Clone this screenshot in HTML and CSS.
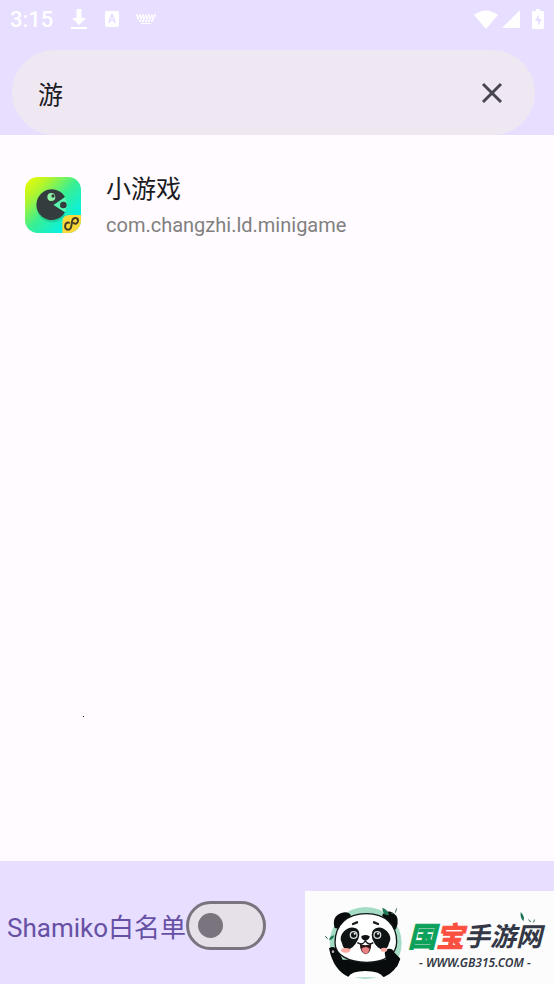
FILE: index.html
```html
<!DOCTYPE html>
<html lang="zh-CN">
<head>
    <meta charset="UTF-8">
    <meta name="viewport" content="width=device-width, initial-scale=1.0">
    <title>Shamiko白名单</title>
    <link rel="stylesheet" href="styles.css">
</head>
<body>
    <header class="top">
        <div class="status-bar">
            <span class="clock">3:15</span>
            <svg class="icon-download" viewBox="0 0 16 22"><path d="M5.500 1h5v9H15l-7 7-7-7h4.500zM0 19h16v2H0z"/></svg>
            <svg class="icon-a" viewBox="0 0 14 16"><path fill-rule="evenodd" d="M1 0h12l1 1v14l-1 1H1l-1-1V1zM6 3 3 12h2l.6-2h2.800L9 12h2L8 3zm1 2.500L8 8.500H6z"/></svg>
            <svg class="icon-keyboard" viewBox="0 0 20 12">
                <path d="M0 2.500h20M1 5.500h18M3 8h14" stroke-width="2" stroke-dasharray="2 1"/>
                <path d="M5 10.500h10M1 4h18"/>
            </svg>
            <span class="spacer"></span>
            <svg class="icon-wifi" viewBox="0 0 24 19"><path d="M0 5Q12-4 24 5L12 19z"/></svg>
            <svg class="icon-signal" viewBox="0 0 18 18"><path d="M18 0v18H0z"/></svg>
            <svg class="icon-battery" viewBox="0 0 12 20"><path fill-rule="evenodd" d="M4 0h4v2h3l1 1v16l-1 1H1l-1-1V3l1-1h3zM7 5l-4 7h3v5l4-7H7z"/></svg>
        </div>
        <form class="search">
            <input class="search-input" type="text" value="游" aria-label="搜索">
            <button class="clear" type="button" aria-label="清除">
                <svg viewBox="0 0 22 22"><path d="M2 2l18 18M20 2 2 20"/></svg>
            </button>
        </form>
    </header>

    <main class="list">
        <div class="app">
            <svg class="app-icon" viewBox="0 0 168 168">
                <defs>
                    <linearGradient id="appBg" x1="0" y1="0" x2="1" y2="1">
                        <stop offset="0" stop-color="#f4fa00"/>
                        <stop offset=".22" stop-color="#b4f62a"/>
                        <stop offset=".5" stop-color="#38ef94"/>
                        <stop offset=".8" stop-color="#08f0e0"/>
                    </linearGradient>
                    <clipPath id="appClip"><rect width="168" height="168" rx="38"/></clipPath>
                </defs>
                <g clip-path="url(#appClip)">
                    <rect width="168" height="168" fill="url(#appBg)"/>
                    <path d="M120 66A46 46 0 1 0 120 114L86 90z" fill="#16a878" opacity=".4"/>
                    <path d="M120 60A46 46 0 1 0 120 106L86 84z" fill="#343c3e"/>
                    <circle cx="79" cy="60" r="12" fill="#8df7a4"/>
                    <circle cx="84" cy="57" r="5" fill="#343c3e"/>
                    <path d="M86 84l34-23 6 22-6 22z" fill="#5cf3b0"/>
                    <circle cx="115" cy="84" r="10" fill="#343c3e"/>
                    <path d="M112 168v-32q0-22 22-22h34v54z" fill="#fbd93a"/>
                    <path d="M132 137c-14-3-16 21-3 21 14 0 9-18 13-28 4-11 18-8 17 2-1 8-8 10-13 6" fill="none" stroke="#443d25" stroke-width="6" stroke-linecap="round"/>
                </g>
            </svg>
            <div class="app-text">
                <h2 class="app-name">小游戏</h2>
                <p class="app-package">com.changzhi.ld.minigame</p>
            </div>
        </div>
        <span class="dot"></span>
    </main>

    <footer class="bottom">
        <label class="switch-label" for="whitelist">Shamiko白名单</label>
        <input class="switch" type="checkbox" role="switch" id="whitelist">
        <div class="brand">
            <svg class="panda" viewBox="72 75 240 222">
                <circle cx="197" cy="189" r="108" fill="#a5dcc5"/>
                <path d="M104 144q-10-34 20-45 20-6 29 7l-34 41zM246 106q14-18 34-7 22 14 8 48l-10 6z" fill="#090c0d"/>
                <path d="M87 205q14-10 27 4l14 30h130l-4-22q9-16 24-5l23 24q-12 38-49 55H146q-46-20-59-86z" fill="#090c0d"/>
                <path d="M144 292q10-19 52-19t55 19z" fill="#fff"/>
                <path d="M105 188c0-53 35-87 94-87s91 35 91 85c0 38-36 61-90 61s-95-22-95-59z" fill="#fff" stroke="#111617" stroke-width="4"/>
                <path d="M254 220q2-14 14-14 12 0 14 12l18 18-10 26-30-12z" fill="#090c0d"/>
                <circle cx="99" cy="215" r="4" fill="#b4aead"/>
                <g fill="#101314">
                    <path d="M126 190q-11-18 6-36 17-17 36-9 16 9 7 32-15 31-35 32-10-1-14-19z"/>
                    <path d="M267 190q11-18-6-36-17-17-34-9-17 9-10 32 13 31 34 32 12-1 16-19z"/>
                    <path d="M184 169q12-8 25 0 0 9-13 14-13-5-12-14z"/>
                </g>
                <g fill="#101314" stroke="#d6dedf" stroke-width="4">
                    <circle cx="161" cy="165" r="10"/>
                    <circle cx="232" cy="165" r="10"/>
                </g>
                <g fill="#fff"><circle cx="164" cy="161" r="3"/><circle cx="234" cy="161" r="3"/></g>
                <path d="M159 132l12-5M222 127l12 5" stroke="#171b1c" stroke-width="7" stroke-linecap="round"/>
                <path d="M179 190q17 12 35 0-1 31-17 33-16-2-18-33z" fill="#2c1717"/>
                <path d="M184 206q13-10 25 0-4 15-12 15t-13-15z" fill="#ef8182"/>
                <path d="M172 188q15 9 24-5 10 14 24 5" fill="none" stroke="#171b1c" stroke-width="4"/>
                <g fill="#f9aba1"><ellipse cx="137" cy="211" rx="14" ry="7"/><ellipse cx="252" cy="209" rx="10" ry="6"/></g>
                <path d="M247 83q18 6 20 23-20 0-20-23zM87 181q2-14 16-15-3 13-16 15z" fill="#217b58"/>
                <path d="M273 99l9 2M286 98l4-13M76 168l7 9" stroke="#3d675b" stroke-width="3"/>
            </svg>
            <div class="brand-text">
                <p class="brand-name"><span class="guo">国</span><span class="bao">宝</span><span class="rest">手游网</span></p>
                <p class="brand-url">- WWW.GB315.COM -</p>
            </div>
            <svg class="leaves" viewBox="0 0 48 36">
                <path d="M2 0q14 14 8 28Q0 18 2 0z" fill="#1b6f50"/>
                <path d="M25 20l10 10q-10 0-10-10zM38 32l5-12q5 9-5 12z" fill="#5b8d7c"/>
            </svg>
        </div>
    </footer>
</body>
</html>
```
FILE: styles.css
```css
* {
    box-sizing: border-box;
}
body {
    margin: 0;
    min-height: 100vh;
    display: flex;
    flex-direction: column;
    background-color: #fffbff;
    color: #1c1b1f;
    font-family: Roboto, "Noto Sans CJK SC", sans-serif;
}
h2, p {
    margin: 0;
    font-weight: normal;
}
.top {
    background-color: #e8deff;
}

/* status bar */
.status-bar {
    display: flex;
    align-items: center;
    height: 38px;
    margin-bottom: 12px;
    padding: 0 10px;
    color: #fff;
    fill: #fff;
}
.clock {
    font-size: 22px;
    font-weight: 500;
    margin-right: 18px;
}
.icon-download {
    width: 16px;
    height: 22px;
    margin-right: 18px;
}
.icon-a {
    width: 14px;
    height: 16px;
    margin-right: 17px;
}
.icon-keyboard {
    width: 20px;
    height: 12px;
    stroke: #fff;
}
.spacer {
    flex: 1;
}
.icon-wifi {
    width: 24px;
    height: 19px;
    margin-right: 4px;
}
.icon-signal {
    width: 18px;
    height: 18px;
    margin-right: 12px;
}
.icon-battery {
    width: 12px;
    height: 20px;
}

/* search field */
.search {
    display: flex;
    align-items: center;
    height: 85px;
    margin: 0 19px 0 12px;
    padding: 0 20px 0 26px;
    border-radius: 43px;
    background-color: #efe8f3;
}
.search-input {
    flex: 1;
    min-width: 0;
    padding: 0;
    border: 0;
    outline: 0;
    background: none;
    color: inherit;
    font-family: inherit;
    font-size: 25px;
}
.clear {
    display: flex;
    padding: 12px;
    border: 0;
    background: none;
}
.clear svg {
    width: 22px;
    height: 22px;
    stroke: #49454f;
    stroke-width: 3;
}

/* app list */
.list {
    position: relative;
    flex: 1;
    padding-top: 34px;
}
.app {
    display: flex;
    align-items: center;
    gap: 25px;
    padding: 0 25px;
}
.app-icon {
    width: 56px;
    height: 56px;
}
.app-name {
    font-size: 25px;
    line-height: 38px;
    padding-top: 2px;
}
.app-package {
    color: #808080;
    font-size: 20px;
    line-height: 32px;
}
.dot {
    position: absolute;
    left: 15%;
    top: 80%;
    width: 1px;
    height: 1px;
    background-color: #1c1b1f;
}

/* bottom bar */
.bottom {
    position: relative;
    display: flex;
    align-items: center;
    min-height: 123px;
    padding: 6px 7px 0;
    background-color: #e8deff;
}
.switch-label {
    min-width: 179px;
    color: #6650a4;
    font-size: 26px;
    white-space: nowrap;
}
.switch {
    appearance: none;
    display: flex;
    align-items: center;
    width: 80px;
    height: 49px;
    margin: 0;
    padding: 0 9px;
    border: 3px solid #79747e;
    border-radius: 25px;
    background-color: #e6e0e9;
}
.switch::before {
    content: "";
    width: 25px;
    height: 25px;
    border-radius: 50%;
    background-color: #79747e;
}
.switch:checked {
    justify-content: flex-end;
    background-color: #6650a4;
}

/* site badge over the bar's corner */
.brand {
    position: absolute;
    right: 0;
    bottom: 0;
    display: flex;
    align-items: center;
    gap: 4px;
    height: 93px;
    padding: 8px 12px 0 19px;
    background-color: #fbfcfb;
    color: #343846;
}
.panda {
    width: 80px;
    height: 74px;
}
.brand-text {
    padding-top: 8px;
    text-align: center;
}
.brand-name {
    display: flex;
    align-items: center;
    font-family: "Noto Sans CJK SC", sans-serif;
    font-style: italic;
    font-weight: bold;
    line-height: 34px;
}
.guo, .bao {
    font-size: 28px;
    -webkit-text-stroke: 1px;
}
.guo {
    color: #0ba15b;
}
.bao {
    color: #fb4f40;
}
.rest {
    font-size: 26px;
}
.brand-url {
    font-family: "Noto Sans", sans-serif;
    font-size: 12px;
    font-style: italic;
    font-weight: 600;
    line-height: 22px;
}
.leaves {
    position: absolute;
    top: 21px;
    right: 18px;
    width: 16px;
    height: 12px;
}
```
